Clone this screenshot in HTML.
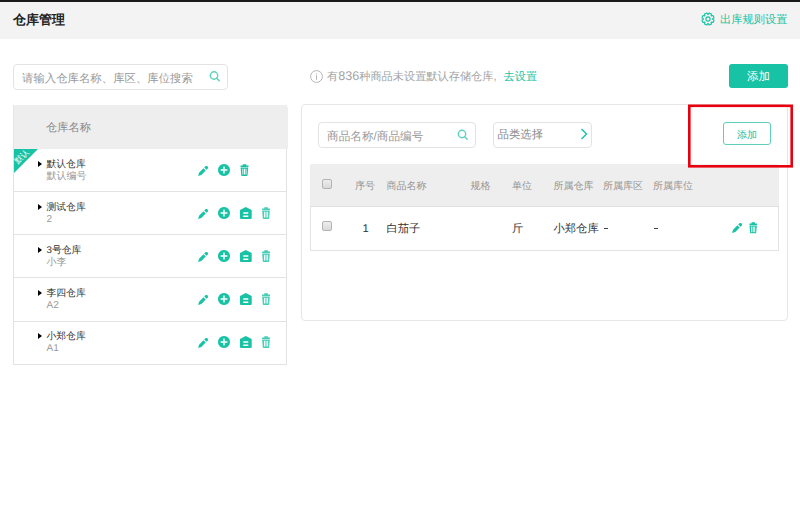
<!DOCTYPE html>
<html><head><meta charset="utf-8">
<style>
*{margin:0;padding:0;box-sizing:border-box}
html,body{width:800px;height:531px;overflow:hidden;background:#fff;font-family:"Liberation Sans",sans-serif;color:#333;text-rendering:geometricPrecision}
.a{position:absolute;white-space:nowrap}
.t{position:absolute;white-space:nowrap;line-height:1}
.topline{left:0;top:0;width:800px;height:2px;background:#1a1a1a}
.hdr{left:0;top:2px;width:800px;height:37px;background:#f3f3f3}
.teal{color:#18c2a4}
.lp{left:13px;top:105px;width:274px;height:260px;border:1px solid #e3e3e3;border-top:none}
.lphdr{left:13px;top:105px;width:275px;height:43.5px;background:#eeeeee;border-radius:4px 4px 0 0;border-left:1px solid #e6e6e6}
.hl{position:absolute;left:13px;width:274px;height:1px;background:#e3e3e3}
.rp{left:301px;top:104px;width:487px;height:217px;border:1px solid #e6e6e6;border-radius:4px}
.red{left:688px;top:104.5px;width:105px;height:63px;border:3px solid #e8000e}
.inp{border:1px solid #e3e3e3;border-radius:4px}
.cb{position:absolute;width:10px;height:10px;border:1px solid #b3b3b3;border-radius:2px;background:linear-gradient(#eeeeee,#d9d9d9)}
.th{color:#949494;font-size:10px}
.td{color:#333;font-size:11.3px}
.nm{color:#333;font-size:9.8px}
.sb{color:#999;font-size:10px}
.caret{position:absolute;width:0;height:0;border-top:3.3px solid transparent;border-bottom:3.3px solid transparent;border-left:4.6px solid #000}
svg.i{position:absolute;overflow:visible}
</style></head><body>
<div class="a topline"></div>
<div class="a hdr"></div>
<div class="t" style="left:13px;top:13px;font-size:13px;font-weight:bold;color:#222">仓库管理</div>

<!-- gear -->
<svg class="i" style="left:700.5px;top:11.5px" width="14" height="14" viewBox="0 0 14 14"><path d="M11.64 7.24 L13.05 8.12 L12.07 10.49 L10.46 10.11 L10.11 10.46 L10.49 12.07 L8.12 13.05 L7.24 11.64 L6.76 11.64 L5.88 13.05 L3.51 12.07 L3.89 10.46 L3.54 10.11 L1.93 10.49 L0.95 8.12 L2.36 7.24 L2.36 6.76 L0.95 5.88 L1.93 3.51 L3.54 3.89 L3.89 3.54 L3.51 1.93 L5.88 0.95 L6.76 2.36 L7.24 2.36 L8.12 0.95 L10.49 1.93 L10.11 3.54 L10.46 3.89 L12.07 3.51 L13.05 5.88 L11.64 6.76 Z" fill="none" stroke="#18c2a4" stroke-width="1.15" stroke-linejoin="round"/><circle cx="7" cy="7" r="2.1" fill="none" stroke="#18c2a4" stroke-width="1.15"/></svg>
<div class="t teal" style="left:720px;top:14.7px;font-size:11.25px">出库规则设置</div>

<!-- left search -->
<div class="a inp" style="left:13px;top:64px;width:215px;height:25.5px"></div>
<div class="t" style="left:22px;top:73.5px;font-size:11.4px;color:#999">请输入仓库名称、库区、库位搜索</div>
<svg class="i" style="left:209px;top:70px" width="12" height="12" viewBox="0 0 12 12"><circle cx="5" cy="5.5" r="3.7" fill="none" stroke="#5fd2bc" stroke-width="1.4"/><path d="M7.6 8.2 L10.2 10.8" stroke="#5fd2bc" stroke-width="1.5" stroke-linecap="round"/></svg>

<!-- info -->
<svg class="i" style="left:310px;top:70px" width="13" height="13" viewBox="0 0 13 13"><circle cx="6.5" cy="6.5" r="5.9" fill="none" stroke="#b5b5b5" stroke-width="1"/><rect x="6" y="5.3" width="1" height="4.5" fill="#b5b5b5"/><rect x="6" y="3.3" width="1" height="1" fill="#b5b5b5"/></svg>
<div class="t" style="left:327px;top:72px;font-size:11.2px;color:#a3a3a3">有<span style="font-size:12.6px;line-height:0">836</span>种商品未设置默认存储仓库,<span class="teal" style="margin-left:7px">去设置</span></div>

<div class="a" style="left:729px;top:64px;width:59px;height:24px;background:#18c2a4;border-radius:3px"></div>
<div class="t" style="left:747px;top:72px;font-size:11.5px;color:#fff">添加</div>

<!-- left panel -->
<div class="a lp"></div>
<div class="a lphdr"></div>
<div class="t" style="left:46px;top:123px;font-size:11.25px;color:#888">仓库名称</div>
<div class="hl" style="top:191px"></div>
<div class="hl" style="top:234px"></div>
<div class="hl" style="top:277px"></div>
<div class="hl" style="top:321px"></div>

<!-- badge -->
<svg class="i" style="left:14px;top:149px" width="24" height="24" viewBox="0 0 24 24"><path d="M0 0 H24 L0 24 Z" fill="#18c2a4"/></svg>

<div class="t" style="left:14px;top:149px;width:16px;height:16px;font-size:8px;line-height:16px;text-align:center;color:#fff;transform:rotate(-45deg);transform-origin:8px 8px">默认</div>
<!-- rows -->
<div class="caret" style="left:38px;top:160.5px"></div>
<div class="t nm" style="left:46.5px;top:160px">默认仓库</div>
<div class="t sb" style="left:46.5px;top:171.5px">默认编号</div>

<div class="caret" style="left:38px;top:203.5px"></div>
<div class="t nm" style="left:46.5px;top:203px">测试仓库</div>
<div class="t sb" style="left:46.5px;top:214.5px">2</div>

<div class="caret" style="left:38px;top:246.5px"></div>
<div class="t nm" style="left:46.5px;top:246px">3号仓库</div>
<div class="t sb" style="left:46.5px;top:257.5px">小李</div>

<div class="caret" style="left:38px;top:289.5px"></div>
<div class="t nm" style="left:46.5px;top:289px">李四仓库</div>
<div class="t sb" style="left:46.5px;top:300.5px">A2</div>

<div class="caret" style="left:38px;top:332.5px"></div>
<div class="t nm" style="left:46.5px;top:332px">小郑仓库</div>
<div class="t sb" style="left:46.5px;top:343.5px">A1</div>

<!-- right panel -->
<div class="a rp"></div>
<div class="a inp" style="left:318px;top:122px;width:158px;height:25.5px"></div>
<div class="t" style="left:327px;top:130.7px;font-size:11.65px;color:#999">商品名称/商品编号</div>
<svg class="i" style="left:457px;top:128.5px" width="12" height="12" viewBox="0 0 12 12"><circle cx="5" cy="5" r="3.7" fill="none" stroke="#5fd2bc" stroke-width="1.4"/><path d="M7.6 7.7 L10.2 10.3" stroke="#5fd2bc" stroke-width="1.5" stroke-linecap="round"/></svg>

<div class="a inp" style="left:492.5px;top:122px;width:99px;height:25.5px"></div>
<div class="t" style="left:497.5px;top:129.5px;font-size:11.4px;color:#888">品类选择</div>
<svg class="i" style="left:580px;top:128px" width="8" height="12" viewBox="0 0 8 12"><path d="M1.5 1 L6.5 6 L1.5 11" fill="none" stroke="#18c2a4" stroke-width="1.4"/></svg>

<div class="a" style="left:723px;top:122px;width:48px;height:23px;border:1px solid #5fcfb9;border-radius:3px"></div>
<div class="t" style="left:737px;top:131px;font-size:10px;color:#22bb9d">添加</div>

<!-- table -->
<div class="a" style="left:310px;top:164px;width:469px;height:87px;border:1px solid #e3e3e3;border-top:none;border-radius:3px 3px 0 0"></div>
<div class="a" style="left:310px;top:164px;width:469px;height:42.5px;background:#eeeeee;border-radius:3px 3px 0 0;border-bottom:1px solid #e0e0e0"></div>
<div class="cb" style="left:322px;top:178.5px"></div>
<div class="cb" style="left:322px;top:221px"></div>
<div class="t th" style="left:355px;top:182px">序号</div>
<div class="t th" style="left:386.5px;top:182px">商品名称</div>
<div class="t th" style="left:470.5px;top:182px">规格</div>
<div class="t th" style="left:512px;top:182px">单位</div>
<div class="t th" style="left:553.5px;top:182px">所属仓库</div>
<div class="t th" style="left:603px;top:182px">所属库区</div>
<div class="t th" style="left:653px;top:182px">所属库位</div>

<div class="t td" style="left:362.5px;top:224px">1</div>
<div class="t td" style="left:386.5px;top:224px">白茄子</div>
<div class="t td" style="left:512px;top:224px">斤</div>
<div class="t td" style="left:553.5px;top:224px">小郑仓库</div>
<div class="a" style="left:603.8px;top:227.6px;width:4px;height:1.3px;background:#444"></div>
<div class="a" style="left:653.8px;top:227.6px;width:3.8px;height:1.3px;background:#444"></div>

<div id="icons"><svg width="0" height="0" style="position:absolute">
<defs>
<symbol id="pen" viewBox="0 0 10 10"><path fill="#18c2a4" d="M0.1 9.9 L1.07 6.67 L5.47 2.27 L7.73 4.53 L3.33 8.93 Z"/><path fill="#18c2a4" d="M6.27 1.47 L7.37 0.37 A1.6 1.6 0 0 1 9.63 2.63 L8.53 3.73 Z"/></symbol>
<symbol id="plus" viewBox="0 0 12 12"><path fill="#18c2a4" fill-rule="evenodd" d="M6 0 A6 6 0 1 0 6.001 0 Z M5.3 2.6 H6.7 V5.3 H9.4 V6.7 H6.7 V9.4 H5.3 V6.7 H2.6 V5.3 H5.3 Z"/></symbol>
<symbol id="home" viewBox="0 0 12 12"><path fill="#18c2a4" fill-rule="evenodd" d="M5.8 0 L11.7 3.1 V11 Q11.7 12 10.7 12 H1 Q0 12 0 11 V3.1 Z M3.3 5.3 V6.8 H8.3 V5.3 Z M3.3 8.6 V10.1 H8.3 V8.6 Z"/></symbol>
<symbol id="trash" viewBox="0 0 8 12"><path fill="#18c2a4" fill-rule="evenodd" d="M2.2 0.2 H5.8 V1.6 H8 V3 H0 V1.6 H2.2 Z M0.1 3.6 H7.7 L7.1 11.2 Q7 12 6.2 12 H1.6 Q0.8 12 0.7 11.2 Z M1.9 4.8 V10.6 H2.8 V4.8 Z M3.5 4.8 V10.6 H4.4 V4.8 Z M5.1 4.8 V10.6 H6.0 V4.8 Z"/></symbol>
</defs></svg>
<svg class="i" style="left:198px;top:166px;opacity:1" width="10" height="10"><use width="100%" height="100%" href="#pen"/></svg>
<svg class="i" style="left:218.2px;top:164px;opacity:1" width="12" height="12"><use width="100%" height="100%" href="#plus"/></svg>
<svg class="i" style="left:240.2px;top:164px;opacity:1" width="9" height="12"><use width="100%" height="100%" href="#trash"/></svg>
<svg class="i" style="left:198px;top:209px;opacity:1" width="10" height="10"><use width="100%" height="100%" href="#pen"/></svg>
<svg class="i" style="left:218.2px;top:207px;opacity:1" width="12" height="12"><use width="100%" height="100%" href="#plus"/></svg>
<svg class="i" style="left:240.2px;top:207px;opacity:1" width="12" height="12"><use width="100%" height="100%" href="#home"/></svg>
<svg class="i" style="left:262px;top:207px;opacity:0.8" width="8.2" height="12"><use width="100%" height="100%" href="#trash"/></svg>
<svg class="i" style="left:198px;top:252px;opacity:1" width="10" height="10"><use width="100%" height="100%" href="#pen"/></svg>
<svg class="i" style="left:218.2px;top:250px;opacity:1" width="12" height="12"><use width="100%" height="100%" href="#plus"/></svg>
<svg class="i" style="left:240.2px;top:250px;opacity:1" width="12" height="12"><use width="100%" height="100%" href="#home"/></svg>
<svg class="i" style="left:262px;top:250px;opacity:0.8" width="8.2" height="12"><use width="100%" height="100%" href="#trash"/></svg>
<svg class="i" style="left:198px;top:295px;opacity:1" width="10" height="10"><use width="100%" height="100%" href="#pen"/></svg>
<svg class="i" style="left:218.2px;top:293px;opacity:1" width="12" height="12"><use width="100%" height="100%" href="#plus"/></svg>
<svg class="i" style="left:240.2px;top:293px;opacity:1" width="12" height="12"><use width="100%" height="100%" href="#home"/></svg>
<svg class="i" style="left:262px;top:293px;opacity:0.8" width="8.2" height="12"><use width="100%" height="100%" href="#trash"/></svg>
<svg class="i" style="left:198px;top:338px;opacity:1" width="10" height="10"><use width="100%" height="100%" href="#pen"/></svg>
<svg class="i" style="left:218.2px;top:336px;opacity:1" width="12" height="12"><use width="100%" height="100%" href="#plus"/></svg>
<svg class="i" style="left:240.2px;top:336px;opacity:1" width="12" height="12"><use width="100%" height="100%" href="#home"/></svg>
<svg class="i" style="left:262px;top:336px;opacity:0.8" width="8.2" height="12"><use width="100%" height="100%" href="#trash"/></svg>
<svg class="i" style="left:732px;top:223.2px;opacity:1" width="10" height="10"><use width="100%" height="100%" href="#pen"/></svg>
<svg class="i" style="left:748.5px;top:222px;opacity:1" width="8.5" height="11.5"><use width="100%" height="100%" href="#trash"/></svg></div>
<svg class="i" style="left:0;top:0" width="800" height="531"><rect x="689.3" y="105.8" width="102.4" height="60.5" fill="none" stroke="#e8000e" stroke-width="2.6"/></svg>
</body></html>
